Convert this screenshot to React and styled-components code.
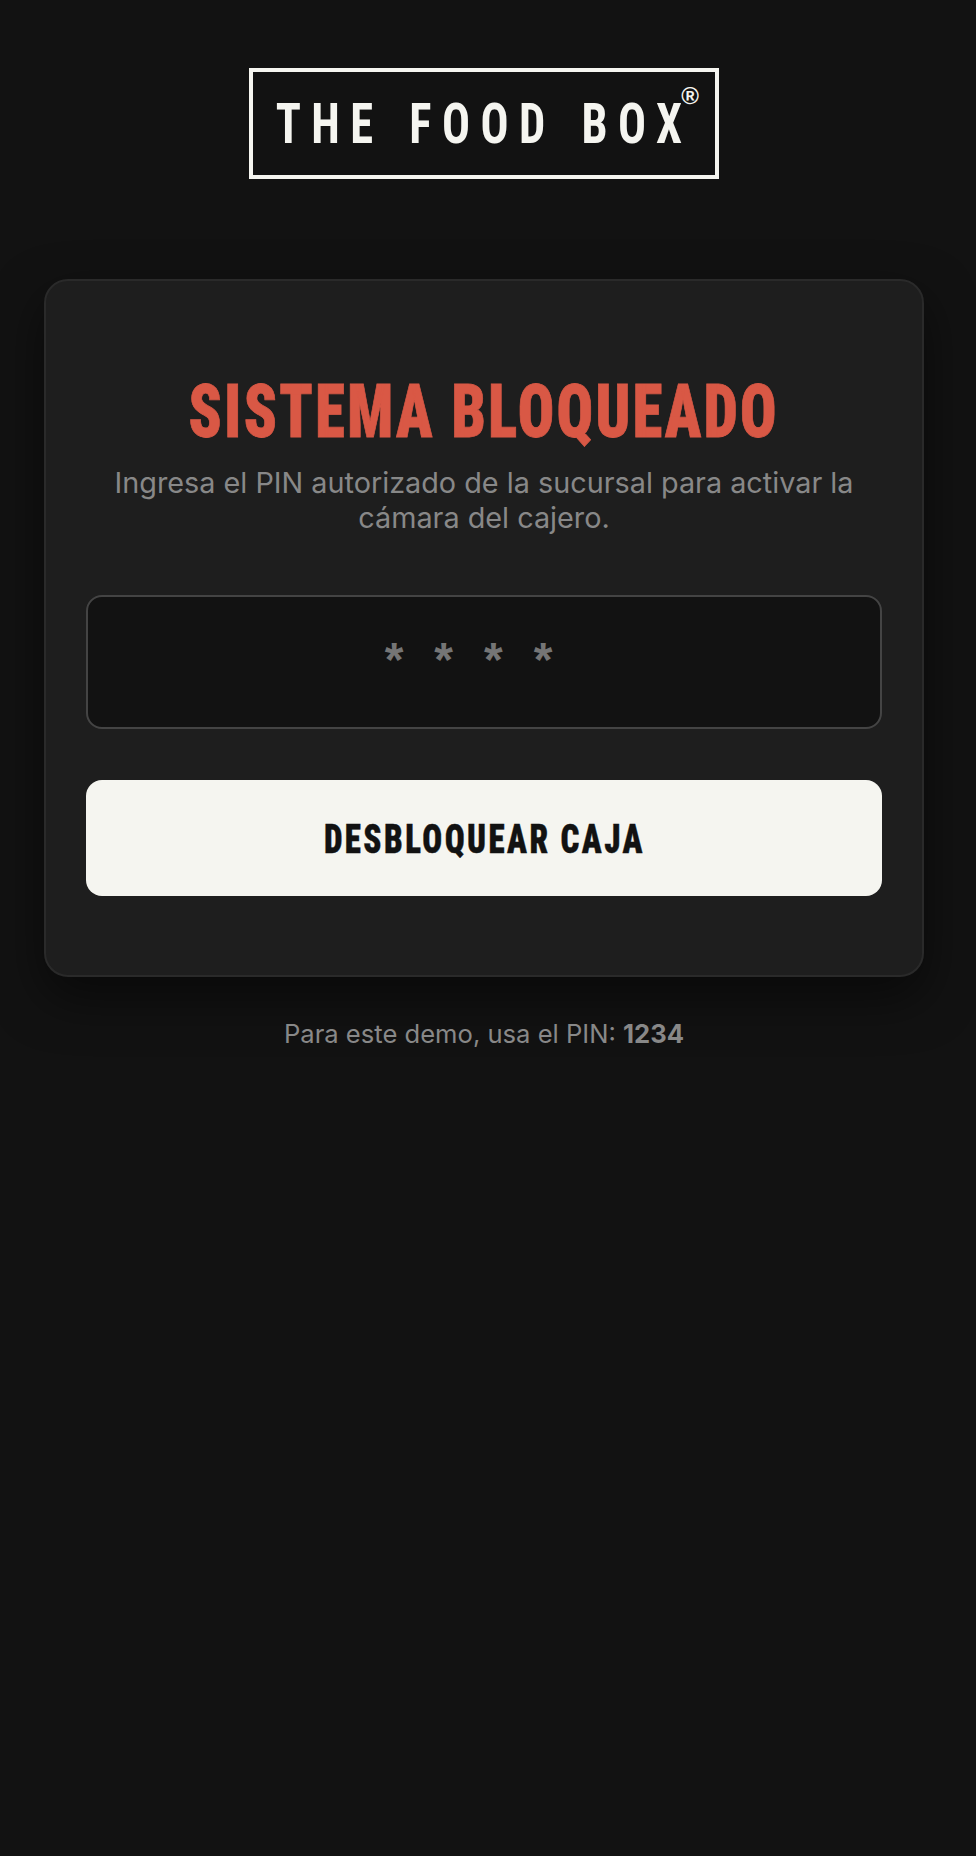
import React from "react";
import styled, { createGlobalStyle } from "styled-components";

const GlobalStyle = createGlobalStyle`
  html, body {
    margin: 0;
    padding: 0;
    background: #121212;
  }
  * {
    box-sizing: border-box;
  }
`;

const Page = styled.main`
  min-height: 1856px;
  display: flex;
  flex-direction: column;
  align-items: center;
  padding: 68px 52px 0 44px;
  background: #121212;
  font-family: Inter, "Liberation Sans", sans-serif;
`;

const Logo = styled.div`
  position: relative;
  width: 470px;
  height: 111px;
  margin-bottom: 100px;
  border: 4px solid #f5f5f0;
  display: flex;
  align-items: center;
  justify-content: center;
`;

// Roboto condensed and squeezed a bit more, nearest thing to Oswald here
const LogoText = styled.span`
  display: inline-block;
  font-family: Roboto, sans-serif;
  font-stretch: 75%;
  font-size: 56px;
  font-weight: 700;
  line-height: 40px;
  letter-spacing: 12.6px;
  word-spacing: 5.5px;
  color: #f5f5f0;
  white-space: nowrap;
  transform: scaleX(0.83);
`;

const Registered = styled.sup`
  position: absolute;
  top: 15px;
  right: 16px;
  font-family: "Liberation Sans", sans-serif;
  font-size: 24px;
  font-weight: 700;
  line-height: 17px;
  color: #f5f5f0;
`;

const Card = styled.section`
  width: 880px;
  height: 698px;
  padding: 93px 40px 0;
  background: #1e1e1e;
  border: 2px solid #2a2a2a;
  border-radius: 24px;
  box-shadow: 0 20px 50px rgba(0, 0, 0, 0.5);
  display: flex;
  flex-direction: column;
  align-items: center;
`;

const Title = styled.h1`
  margin: 0 0 15px;
  font-family: Roboto, sans-serif;
  font-stretch: 75%;
  font-size: 74px;
  font-weight: 900;
  line-height: 76px;
  letter-spacing: 3px;
  color: #d95845;
  white-space: nowrap;
  -webkit-text-stroke: 0.8px #d95845;
  transform: scaleX(0.816);
`;

const Subtitle = styled.p`
  margin: 0 0 60px;
  font-size: 28.8px;
  line-height: 35px;
  text-align: center;
  color: #888888;
`;

const PinInput = styled.input`
  width: 100%;
  height: 134px;
  margin-bottom: 51px;
  padding: 0 0 5px;
  background: #121212;
  border: 2px solid #444444;
  border-radius: 16px;
  font-family: "Liberation Sans", sans-serif;
  font-size: 48px;
  font-weight: 700;
  letter-spacing: 31px;
  text-align: center;
  color: #f5f5f0;
  outline: none;

  &::placeholder {
    color: #757575;
    opacity: 1;
  }
`;

const UnlockButton = styled.button`
  width: 100%;
  height: 116px;
  padding: 2px 0 0;
  background: #f5f5f0;
  border: none;
  border-radius: 16px;
  cursor: pointer;
`;

const ButtonLabel = styled.span`
  display: inline-block;
  font-family: Roboto, sans-serif;
  font-stretch: 75%;
  font-size: 41px;
  font-weight: 900;
  letter-spacing: 3px;
  color: #121212;
  white-space: nowrap;
  -webkit-text-stroke: 0.4px #121212;
  transform: scaleX(0.805);
`;

const DemoHint = styled.p`
  margin: 41px 0 0;
  font-size: 25.6px;
  line-height: 32px;
  text-align: center;
  color: #888888;

  strong {
    font-weight: 700;
  }
`;

export default function App() {
  return (
    <>
      <GlobalStyle />
      <Page>
        <Logo>
          <LogoText>THE FOOD BOX</LogoText>
          <Registered>®</Registered>
        </Logo>
        <Card>
          <Title>SISTEMA BLOQUEADO</Title>
          <Subtitle>
            Ingresa el PIN autorizado de la sucursal para activar la cámara del cajero.
          </Subtitle>
          <PinInput type="password" placeholder="****" />
          <UnlockButton>
            <ButtonLabel>DESBLOQUEAR CAJA</ButtonLabel>
          </UnlockButton>
        </Card>
        <DemoHint>
          Para este demo, usa el PIN: <strong>1234</strong>
        </DemoHint>
      </Page>
    </>
  );
}
